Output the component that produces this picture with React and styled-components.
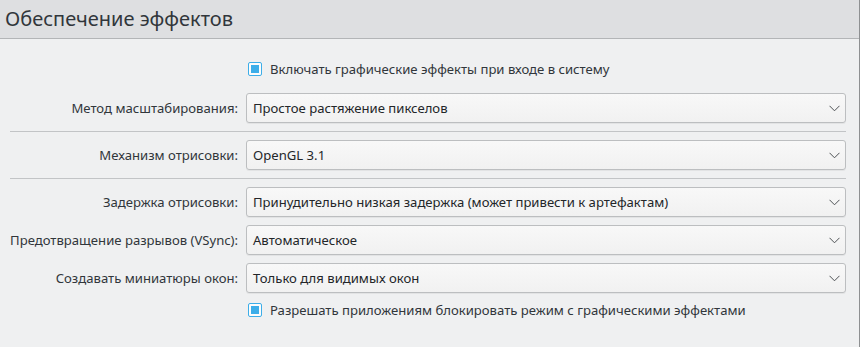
import React from "react";
import styled, { createGlobalStyle } from "styled-components";

const GlobalStyle = createGlobalStyle`
  html, body {
    margin: 0;
    padding: 0;
    background: #eff0f1;
  }
  body {
    font-family: "Noto Sans", "DejaVu Sans", sans-serif;
    font-size: 13.12px;
    color: #232629;
  }
`;

const Page = styled.div`
  width: 860px;
  height: 347px;
  box-sizing: border-box;
  background: #eff0f1;
  border-right: 1px solid #8e9092;
  overflow: hidden;
`;

const Header = styled.div`
  height: 39px;
  box-sizing: border-box;
  background: #dedfe1;
  border-bottom: 1px solid #b3b5b7;
  display: flex;
  align-items: center;
  padding: 0 0 2px 5px;
  font-size: 20px;
  color: #31363b;
`;

const Form = styled.div`
  display: grid;
  grid-template-columns: 228px 1fr;
  column-gap: 8px;
  row-gap: 8px;
  align-items: center;
  padding: 21px 13px 0 10px;
`;

const Label = styled.div`
  text-align: right;
  white-space: nowrap;
  color: #31363b;
`;

const Separator = styled.div`
  grid-column: 1 / -1;
  height: 1px;
  background: #c2c4c6;
`;

const CheckRow = styled.label`
  grid-column: 2;
  display: flex;
  align-items: center;
  gap: 8px;
  height: 18px;
  padding-left: 2px;
  margin-bottom: ${(p) => (p.$first ? "7px" : "0")};
  color: #31363b;
`;

const Box = styled.span`
  width: 14px;
  height: 14px;
  box-sizing: border-box;
  border: 1px solid #3daee9;
  border-radius: 2px;
  background: #fcfcfc;
  padding: 2px;
  display: flex;

  &::after {
    content: "";
    flex: 1;
    background: #3daee9;
  }
`;

const Combo = styled.div`
  height: 30px;
  box-sizing: border-box;
  display: flex;
  align-items: center;
  justify-content: space-between;
  padding: 0 5px 0 6px;
  border: 1px solid #bcbec0;
  border-radius: 3px;
  background: linear-gradient(#f8f8f8, #f1f1f1);
  box-shadow: 0 1px 0 rgba(0, 0, 0, 0.05);
  color: #232629;
`;

const Chevron = () => (
  <svg width="11" height="7" viewBox="0 0 11 7">
    <polyline points="0.5,0.8 5.5,5.8 10.5,0.8" fill="none" stroke="#4d5154" strokeWidth="1" />
  </svg>
);

const Field = ({ label, value }) => (
  <>
    <Label>{label}</Label>
    <Combo>
      <span>{value}</span>
      <Chevron />
    </Combo>
  </>
);

export default function App() {
  return (
    <Page>
      <GlobalStyle />
      <Header>Обеспечение эффектов</Header>
      <Form>
        <CheckRow $first>
          <Box />
          Включать графические эффекты при входе в систему
        </CheckRow>
        <Field label="Метод масштабирования:" value="Простое растяжение пикселов" />
        <Separator />
        <Field label="Механизм отрисовки:" value="OpenGL 3.1" />
        <Separator />
        <Field
          label="Задержка отрисовки:"
          value="Принудительно низкая задержка (может привести к артефактам)"
        />
        <Field label="Предотвращение разрывов (VSync):" value="Автоматическое" />
        <Field label="Создавать миниатюры окон:" value="Только для видимых окон" />
        <CheckRow>
          <Box />
          Разрешать приложениям блокировать режим с графическими эффектами
        </CheckRow>
      </Form>
    </Page>
  );
}
